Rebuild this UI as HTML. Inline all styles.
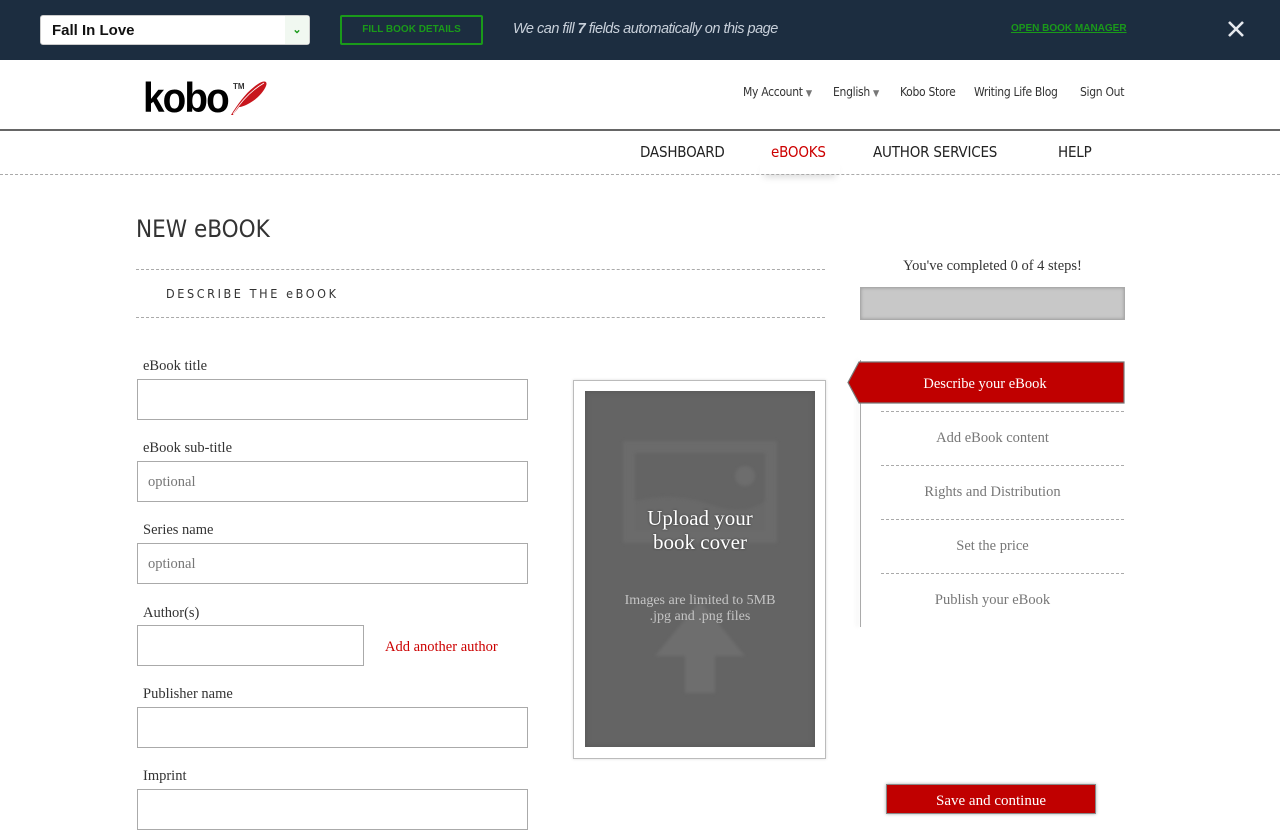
<!DOCTYPE html>
<html><head><meta charset="utf-8"><style>
*{box-sizing:border-box;margin:0;padding:0}
body{width:1280px;height:800px;overflow:hidden;background:#fff;position:relative;font-family:"Liberation Serif",serif;color:#333}
.a{position:absolute}
.top{left:0;top:0;width:1280px;height:60px;background:#1c2d40}
.sel{left:40px;top:15px;width:270px;height:30px;background:#fff;border:1px solid #ccc;border-radius:3px;font:bold 15px "Liberation Sans",sans-serif;color:#111;padding:6px 11px}
.sel i{position:absolute;right:0;top:0;width:24px;height:28px;background:#f1f8f1;color:#1a9a1a;font-style:normal;font-size:11px;text-align:center;line-height:28px}
.btn{left:340px;top:15px;width:143px;height:30px;border:2px solid #1a9a1a;border-radius:2px;color:#1a9a1a;font:bold 10px "Liberation Sans",sans-serif;text-align:center;line-height:26px}
.msg{left:513px;top:21px;color:#c8d0da;font:italic 14.5px "Liberation Sans",sans-serif;letter-spacing:-0.5px}
.lnk{left:1011px;top:23px;color:#1a9a1a;font:bold 10px "Liberation Sans",sans-serif;text-decoration:underline}
.x{left:1227px;top:20px}
.hl{left:0;top:129px;width:1280px;height:2px;background:#666}
.logo{left:143px;top:74px;font:bold 42px "Liberation Sans",sans-serif;color:#000;letter-spacing:-2px;transform:scaleX(0.92);transform-origin:left}
.tm{left:233px;top:82px;font:bold 8px "Liberation Sans",sans-serif}
.um{top:85px;font:12px "DejaVu Sans Condensed","Liberation Sans",sans-serif;color:#333;letter-spacing:-0.3px}
.nav{top:143px;font:15px "DejaVu Sans Condensed","Liberation Sans",sans-serif;color:#222;letter-spacing:-0.2px}
.dash{border-top:1px dashed #aaa;height:0}
.lbl{left:143px;font-size:14.5px;color:#333}
.in{left:137px;width:391px;height:41px;border:1px solid #aaa;font-size:14.5px;color:#777;padding:12px 10px}
.st{left:860px;width:265px;text-align:center;font-size:14.5px;color:#777}
</style></head><body>
<div class="a top"></div>
<div class="a sel">Fall In Love<i>&#8964;</i></div>
<div class="a btn">FILL BOOK DETAILS</div>
<div class="a msg">We can fill <b>7</b> fields automatically on this page</div>
<div class="a lnk">OPEN BOOK MANAGER</div>
<svg class="a x" width="18" height="18" viewBox="0 0 18 18"><path d="M2 2L16 16M16 2L2 16" stroke="#e6e9ee" stroke-width="2.6"/></svg>

<div class="a logo">kobo</div>
<div class="a tm">TM</div>
<svg class="a" style="left:228px;top:80px" width="42" height="36" viewBox="0 0 42 36"><path d="M3 35C10 24 18 12 30 4C36 0 40 1 38 6C35 13 28 20 20 24C16 26 13 27 11 27C9 30 6 33 5 35Z" fill="#c8161d"/><path d="M5 34C14 20 24 10 36 3" stroke="#fff" stroke-width=".8" fill="none"/></svg>
<div class="a um" style="left:743px">My Account <span style="font-size:9px;color:#777">&#9660;</span></div>
<div class="a um" style="left:833px">English <span style="font-size:9px;color:#777">&#9660;</span></div>
<div class="a um" style="left:900px">Kobo Store</div>
<div class="a um" style="left:974px">Writing Life Blog</div>
<div class="a um" style="left:1080px">Sign Out</div>
<div class="a hl"></div>

<div class="a nav" style="left:640px">DASHBOARD</div>
<div class="a" style="left:760px;top:160px;width:80px;height:14px;box-shadow:0 6px 8px -4px #ccc"></div>
<div class="a nav" style="left:771px;color:#c00">eBOOKS</div>
<div class="a nav" style="left:873px">AUTHOR SERVICES</div>
<div class="a nav" style="left:1058px">HELP</div>
<div class="a dash" style="left:0;top:174px;width:1280px"></div>

<div class="a" style="left:136px;top:215px;font:24px 'DejaVu Sans Condensed','Liberation Sans',sans-serif;color:#333">NEW eBOOK</div>
<div class="a dash" style="left:136px;top:269px;width:689px"></div>
<div class="a" style="left:166px;top:286px;font:12.5px 'DejaVu Sans Condensed','Liberation Sans',sans-serif;letter-spacing:2.6px;color:#333">DESCRIBE THE eBOOK</div>
<div class="a dash" style="left:136px;top:317px;width:689px"></div>

<div class="a lbl" style="top:358px">eBook title</div>
<div class="a in" style="top:379px"></div>
<div class="a lbl" style="top:440px">eBook sub-title</div>
<div class="a in" style="top:461px">optional</div>
<div class="a lbl" style="top:522px">Series name</div>
<div class="a in" style="top:543px">optional</div>
<div class="a lbl" style="top:605px">Author(s)</div>
<div class="a in" style="top:625px;width:227px"></div>
<div class="a" style="left:385px;top:639px;font-size:14.5px;color:#c00">Add another author</div>
<div class="a lbl" style="top:686px">Publisher name</div>
<div class="a in" style="top:707px"></div>
<div class="a lbl" style="top:768px">Imprint</div>
<div class="a in" style="top:789px"></div>

<div class="a" style="left:573px;top:380px;width:253px;height:379px;border:1px solid #bbb;box-shadow:0 0 3px #ddd;background:#fff"></div>
<div class="a" style="left:585px;top:391px;width:230px;height:356px;background:#646464;box-shadow:inset 0 0 6px #555"></div>
<svg class="a" style="left:585px;top:391px;filter:blur(1.5px)" width="230" height="356" viewBox="0 0 230 356"><rect x="44" y="56" width="142" height="90" fill="none" stroke="#6b6b6b" stroke-width="12"/><circle cx="160" cy="85" r="10" fill="#6d6d6d"/><path d="M50 110Q90 100 130 115Q160 125 180 110V140H50Z" fill="#696969"/><path d="M115 210L160 265H130V302H100V265H70Z" fill="#6e6e6e"/></svg>
<div class="a" style="left:585px;top:506px;width:230px;text-align:center;font-size:21px;line-height:24px;color:#fff;text-shadow:0 0 2px #333">Upload your<br>book cover</div>
<div class="a" style="left:585px;top:593px;width:230px;text-align:center;font-size:14px;line-height:16px;color:#c4c4c4">Images are limited to 5MB<br>.jpg and .png files</div>

<div class="a" style="left:860px;top:258px;width:265px;text-align:center;font-size:14.5px;color:#333">You've completed 0 of 4 steps!</div>
<div class="a" style="left:860px;top:287px;width:265px;height:33px;background:#c8c8c8;border:1px solid #aaa;box-shadow:inset 0 0 3px #999"></div>
<div class="a" style="left:860px;top:360px;width:1px;height:267px;background:#aaa;box-shadow:-3px 0 5px #ddd"></div>
<svg class="a" style="left:846px;top:361px" width="280" height="46" viewBox="0 0 280 46"><path d="M13 1H278V42H13L2 21.5Z" fill="#c00000" stroke="#777" stroke-width="1.2"/></svg>
<div class="a" style="left:857px;top:376px;width:256px;text-align:center;font-size:14.5px;color:#fff">Describe your eBook</div>
<div class="a dash" style="left:881px;top:411px;width:243px"></div>
<div class="a st" style="top:430px">Add eBook content</div>
<div class="a dash" style="left:881px;top:465px;width:243px"></div>
<div class="a st" style="top:484px">Rights and Distribution</div>
<div class="a dash" style="left:881px;top:519px;width:243px"></div>
<div class="a st" style="top:538px">Set the price</div>
<div class="a dash" style="left:881px;top:573px;width:243px"></div>
<div class="a st" style="top:592px">Publish your eBook</div>

<div class="a" style="left:886px;top:784px;width:210px;height:30px;background:#c00000;border:1px solid #888;box-shadow:0 0 3px #aaa;color:#fff;text-align:center;font-size:15px;padding-top:8px">Save and continue</div>
</body></html>
